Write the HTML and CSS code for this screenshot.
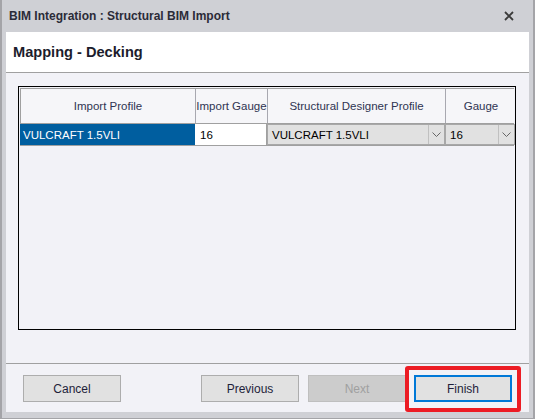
FILE: index.html
```html
<!DOCTYPE html>
<html>
<head>
<meta charset="utf-8">
<link rel="stylesheet" href="styles.css">
</head>
<body>
<div class="window">
  <div class="titlebar">
    <span class="title">BIM Integration : Structural BIM Import</span>
    <svg class="close" width="10" height="10" viewBox="0 0 10 10"><path d="M1 1 L9 9 M9 1 L1 9" stroke="#3a3a3a" stroke-width="1.8" fill="none"/></svg>
  </div>
  <div class="client">
    <div class="header">Mapping - Decking</div>
    <div class="main">
      <div class="grid">
        <div class="row head">
          <div class="hcell">Import Profile</div>
          <div class="hcell">Import Gauge</div>
          <div class="hcell">Structural Designer Profile</div>
          <div class="hcell last">Gauge</div>
        </div>
        <div class="row data">
          <div class="cell selected">VULCRAFT 1.5VLI</div>
          <div class="cell edit">16</div>
          <div class="cell combo"><span class="ctext">VULCRAFT 1.5VLI</span><span class="arrow"><svg width="9" height="6" viewBox="0 0 9 6"><path d="M0.5 0.5 L4.5 4.5 L8.5 0.5" stroke="#666" stroke-width="1" fill="none"/></svg></span></div>
          <div class="cell combo"><span class="ctext">16</span><span class="arrow"><svg width="9" height="6" viewBox="0 0 9 6"><path d="M0.5 0.5 L4.5 4.5 L8.5 0.5" stroke="#666" stroke-width="1" fill="none"/></svg></span></div>
        </div>
      </div>
    </div>
    <div class="footer">
      <button class="btn">Cancel</button>
      <div class="spacer"></div>
      <button class="btn">Previous</button>
      <button class="btn disabled next">Next</button>
      <div class="finish-wrap">
        <button class="btn finish">Finish</button>
        <div class="highlight"></div>
      </div>
    </div>
  </div>
</div>
</body>
</html>
```
FILE: styles.css
```css
html, body {
  margin: 0;
  padding: 0;
  background: #d0d1d6;
}
body {
  font-family: "Liberation Sans", Arial, sans-serif;
  font-size: 12px;
}
.window {
  width: 535px;
  height: 419px;
  box-sizing: border-box;
  background: #cfd0d5;
  border-left: 2px solid #a4a4a8;
  border-right: 2px solid #a4a4a8;
  border-bottom: 1px solid #a4a4a8;
  padding: 0 4px 6px 4px;
  display: flex;
  flex-direction: column;
}
.titlebar {
  height: 32px;
  display: flex;
  align-items: center;
  padding-left: 3px;
  padding-right: 15px;
}
.title {
  font-weight: bold;
  font-size: 12px;
  color: #2b2b38;
  flex: 1;
}
.close {
  display: block;
}
.client {
  flex: 1;
  display: flex;
  flex-direction: column;
  background: #f2f2f7;
}
.header {
  height: 40px;
  background: #ffffff;
  border-bottom: 1px solid #a0a0a0;
  display: flex;
  align-items: center;
  padding-left: 7px;
  font-weight: bold;
  font-size: 14.6px;
  color: #1c1c2c;
}
.main {
  height: 291px;
  padding: 13px 13px 0 12px;
  border-bottom: 1px solid #a0a0a0;
  box-sizing: border-box;
}
.grid {
  height: 244px;
  border: 1px solid #000;
  box-sizing: border-box;
  padding: 1px;
  background: #f2f2f7;
}
.row {
  display: grid;
  grid-template-columns: 175px 72px 178px 70px;
}
.head {
  height: 36px;
  box-sizing: border-box;
  border-top: 1px solid #a0a0a0;
  border-left: 1px solid #a0a0a0;
  border-bottom: 1px solid #a0a0a0;
  background: #f6f6f9;
}
.hcell {
  display: flex;
  align-items: center;
  justify-content: center;
  font-size: 11.5px;
  color: #2f3452;
  border-right: 1px solid #a8a8b0;
  white-space: nowrap;
  overflow: hidden;
}
.hcell.last {
  border-right: none;
}
.data {
  height: 22px;
  box-sizing: border-box;
  border-bottom: 1px solid #a0a0a0;
}
.cell {
  display: flex;
  align-items: center;
  font-size: 11.5px;
  white-space: nowrap;
  overflow: hidden;
}
.selected {
  background: #005e9f;
  color: #ffffff;
  padding-left: 3px;
}
.edit {
  background: #ffffff;
  color: #000;
  padding-left: 5px;
  border-right: 1px solid #a0a0a0;
}
.combo {
  background: #e1e1e1;
  border: 1px solid #a8a8a8;
  box-sizing: border-box;
  color: #000;
  padding-left: 4px;
}
.ctext {
  flex: 1;
}
.arrow {
  width: 15px;
  height: 100%;
  border-left: 1px solid #c0c0c0;
  display: flex;
  align-items: center;
  justify-content: center;
}
.arrow svg {
  display: block;
}
.footer {
  flex: 1;
  display: flex;
  align-items: flex-start;
  padding: 11px 17px 0 17px;
}
.spacer {
  flex: 1;
}
.btn {
  width: 98px;
  height: 27px;
  margin: 0;
  background: #e1e1e1;
  border: 1px solid #adadad;
  font-family: "Liberation Sans", Arial, sans-serif;
  font-size: 12px;
  color: #1e1e3a;
  padding: 0;
}
.btn.next {
  margin-left: 9px;
}
.disabled {
  background: #cccccc;
  border-color: #bfbfbf;
  color: #a0a0a0;
}
.finish-wrap {
  position: relative;
  margin-left: 8px;
}
.finish {
  display: block;
  border: 2px solid #0078d7;
}
.highlight {
  position: absolute;
  left: -9px;
  right: -9px;
  top: -9px;
  bottom: -10px;
  border: 4px solid #ec1c24;
  border-radius: 3px;
  pointer-events: none;
}
```
